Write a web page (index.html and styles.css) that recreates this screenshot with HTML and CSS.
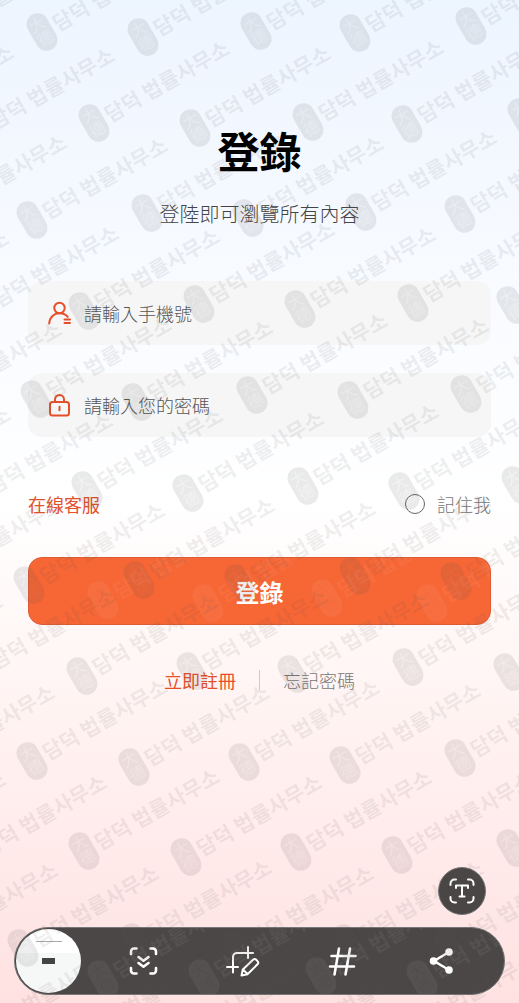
FILE: index.html
```html
<!DOCTYPE html>
<html lang="zh-Hant">
<head>
<meta charset="utf-8">
<meta name="viewport" content="width=device-width, initial-scale=1">
<title>登錄</title>
<link rel="stylesheet" href="styles.css">
</head>
<body>
<main class="login">
  <h1 class="title">登錄</h1>
  <p class="subtitle">登陸即可瀏覽所有內容</p>
  <form class="form">
    <div class="field">
      <label for="phone" aria-label="請輸入手機號">
        <svg class="field-icon" viewBox="0 0 24 24"><circle cx="11.500" cy="7" r="5.200"/><path d="M1.200 22.500C1.700 16 6 12.300 11.500 12.300c3.500 0 6.300 1.200 8.200 3.500M16.500 18.500h5.500M16.500 22h5.500"/></svg>
      </label>
      <input type="tel" id="phone" name="phone" placeholder="請輸入手機號">
    </div>
    <div class="field">
      <label for="password" aria-label="請輸入您的密碼">
        <svg class="field-icon" viewBox="0 0 24 24"><rect x="2" y="9" width="19" height="13.500" rx="2.500"/><path d="M7 9V6.500a4.500 4.500 0 0 1 9 0V9M11.500 13.700v3.600"/></svg>
      </label>
      <input type="password" id="password" name="password" placeholder="請輸入您的密碼">
    </div>
    <div class="options">
      <a class="accent" href="#service">在線客服</a>
      <label class="remember"><input type="checkbox" name="remember">記住我</label>
    </div>
    <button class="submit" type="submit">
      <svg class="glow" aria-hidden="true"><use href="#mark" x="74" y="42"/><use href="#mark" x="179" y="45"/><use href="#mark" x="298" y="40"/><use href="#mark" x="403" y="45"/></svg>
      登錄
    </button>
  </form>
  <nav class="links">
    <a class="accent" href="#register">立即註冊</a>
    <span class="divider"></span>
    <a class="muted" href="#forgot">忘記密碼</a>
  </nav>
</main>

<footer class="tools">
  <button class="text-tool" type="button" aria-label="T">
    <svg viewBox="0 0 28 28"><path d="M2.500 8V6.500a4 4 0 0 1 4-4H8M20 2.500h1.500a4 4 0 0 1 4 4V8M25.500 20v1.500a4 4 0 0 1-4 4H20M8 25.500H6.500a4 4 0 0 1-4-4V20M8 11V8.500h12V11M14 8.500v11M11.500 19.500h5"/></svg>
  </button>
  <div class="toolbar">
    <svg class="glow" aria-hidden="true"><use href="#mark" x="88" y="51"/><use href="#mark" x="189" y="50"/><use href="#mark" x="306" y="48"/><use href="#mark" x="407" y="51"/></svg>
    <button class="thumb" type="button" aria-label="preview"><span class="thumb-line"></span><span class="thumb-box"></span></button>
    <div class="actions">
      <button type="button" aria-label="scroll capture">
        <svg viewBox="0 0 34 34"><path d="M4 10V7.500a3 3 0 0 1 3-3H9.500M23.500 4.500H26a3 3 0 0 1 3 3V10M29 24v2.500a3 3 0 0 1-3 3H23.500M9.500 29.500H7a3 3 0 0 1-3-3V24M11.500 13l5 3.700 5-3.700M11.500 19l5 3.700 5-3.700"/></svg>
      </button>
      <button type="button" aria-label="crop and edit">
        <svg class="thin" viewBox="0 0 34 34"><path d="M1 23h11M7 28.500V13a4 4 0 0 1 4-4h16M22 3v11M15.500 31.500l1.300-6L27 15.800a2.300 2.300 0 0 1 3.200 0l1.300 1.300a2.300 2.300 0 0 1 0 3.200L21.500 30.200zM17 25.500l4.500 4.500"/></svg>
      </button>
      <button type="button" aria-label="hashtag">
        <svg viewBox="0 0 34 34"><path d="M14 4.500l-4.500 26M25 4.500l-4.500 26M6.500 12H30.500M5 22.500H29"/></svg>
      </button>
      <button type="button" aria-label="share">
        <svg viewBox="0 0 34 34"><path d="M25 8L10 17l15 9"/><g class="dots"><circle cx="25" cy="8" r="3.800"/><circle cx="9.500" cy="17" r="3.800"/><circle cx="25" cy="26" r="3.800"/></g></svg>
      </button>
    </div>
  </div>
</footer>

<svg class="watermark" aria-hidden="true">
  <defs>
    <mask id="carved" maskUnits="userSpaceOnUse" x="-12" y="-21" width="24" height="42">
      <rect x="-12" y="-21" width="24" height="42" fill="#fff"/>
      <text class="seal" x="0" y="-3">大</text>
      <text class="seal" x="0" y="13">德</text>
    </mask>
    <g id="mark">
      <g transform="rotate(-30)">
        <rect class="stamp" x="-11" y="-20" width="22" height="40" rx="11" mask="url(#carved)"/>
        <text class="firm" x="14" y="8">담덕 법률사무소</text>
      </g>
    </g>
    <g id="chain">
      <use href="#mark"/>
      <use href="#mark" x="52" y="91"/>
      <use href="#mark" x="105" y="181"/>
      <use href="#mark" x="157" y="272"/>
      <use href="#mark" x="210" y="363"/>
      <use href="#mark" x="261" y="454"/>
      <use href="#mark" x="313" y="544"/>
      <use href="#mark" x="366" y="635"/>
      <use href="#mark" x="418" y="726"/>
      <use href="#mark" x="470" y="816"/>
      <use href="#mark" x="522" y="907"/>
      <use href="#mark" x="574" y="998"/>
    </g>
  </defs>
  <use href="#chain" x="471" y="26"/>
  <use href="#chain" x="355" y="33"/>
  <use href="#chain" x="256" y="31"/>
  <use href="#chain" x="143" y="37"/>
  <use href="#chain" x="42" y="32"/>
  <use href="#chain" x="-73" y="39"/>
  <use href="#chain" x="-174" y="36"/>
  <use href="#chain" x="-284" y="41"/>
  <use href="#chain" x="-386" y="35"/>
  <use href="#chain" x="-499" y="41"/>
  <use href="#chain" x="-600" y="38"/>
</svg>
</body>
</html>
```
FILE: styles.css
```css
* {box-sizing:border-box;}

body {
  margin:0;
  min-height:100vh;
  position:relative;
  display:flex;
  flex-direction:column;
  justify-content:space-between;
  overflow-x:hidden;
  font-family:"Noto Sans CJK TC","Noto Sans CJK KR",sans-serif;
  font-size:18px;
  line-height:28px;
  color:#444;
  background:linear-gradient(#edf5ff 0%,#f7faff 25%,#fff 50%,#fff5f4 68%,#ffe1e1 100%);
}

a {text-decoration:none;}
button {border:0;padding:0;font-family:inherit;cursor:pointer;}

.login {padding:120px 28px 0;text-align:center;}
.title {margin:0;font-size:42px;line-height:60px;font-weight:700;color:#000;}
.subtitle {margin:20px 0 0;font-size:20px;font-weight:300;}

.form {margin-top:53px;display:flex;flex-direction:column;gap:28px;}
.field {
  display:flex;
  align-items:center;
  gap:12px;
  height:64px;
  padding:0 20px;
  border-radius:14px;
  background:#f6f6f6;
}
.field label {display:flex;}
.field input {
  flex:1;
  min-width:0;
  border:0;
  padding:0;
  background:none;
  font:inherit;
  font-weight:300;
  outline:none;
}
.field input::placeholder {color:#555;opacity:1;}
.field-icon {width:24px;height:24px;fill:none;stroke:#e5502a;stroke-width:2;stroke-linecap:round;}

.accent {color:#e5502a;}
.muted {color:#777;}

.options {display:flex;justify-content:space-between;align-items:center;margin:25px 0 11px;}
.remember {display:flex;align-items:center;gap:12px;color:#777;font-weight:300;}
.remember input {
  appearance:none;
  width:20px;
  height:20px;
  margin:0;
  border:1px solid #666;
  border-radius:50%;
}
.remember input:checked {background:#f76635;}

.submit {
  position:relative;
  overflow:hidden;
  height:68px;
  border:1px solid #dd5c35;
  border-radius:14px;
  background:#f76635;
  color:#fff;
  font-size:24px;
  font-weight:700;
}
.glow {--mark:#fff;position:absolute;inset:0;width:100%;height:100%;opacity:.5;}

.links {display:flex;justify-content:center;align-items:center;gap:23px;margin-top:41px;}
.links .muted {font-weight:300;}
.divider {width:1px;height:20px;background:#ccc;}

.tools {display:flex;flex-direction:column;gap:12px;padding:40px 14px 8px;}
.text-tool {
  align-self:flex-end;
  display:flex;
  align-items:center;
  justify-content:center;
  width:48px;
  height:48px;
  margin-right:19px;
  border:1px solid #777;
  border-radius:50%;
  background:#4a4646;
}
.text-tool svg {width:28px;height:28px;}
.tools svg {stroke-width:2;stroke-linecap:round;stroke-linejoin:round;}
.tools button svg {fill:none;stroke:#fff;}
.toolbar {
  position:relative;
  overflow:hidden;
  display:flex;
  align-items:center;
  height:68px;
  padding-left:1px;
  border:1px solid #777;
  border-radius:34px;
  background:#4c4747;
}
.thumb {
  position:relative;
  display:flex;
  flex-direction:column;
  align-items:center;
  gap:16px;
  width:65px;
  height:64px;
  padding-top:12px;
  border-radius:50%;
  background:linear-gradient(#fff 37%,#f6f7f7 37%);
}
.thumb-line {width:26px;height:1px;background:#aaa;}
.thumb-box {width:13px;height:6px;background:#444;}
.actions {position:relative;flex:1;display:flex;justify-content:space-between;padding:0 46px;}
.actions button {display:flex;background:none;}
.actions svg {width:34px;height:34px;stroke-width:2.6;}
.actions .thin {stroke-width:2;}
.tools .dots {fill:#fff;stroke:none;}

/* diagonal watermark over the whole page */
.watermark {
  position:absolute;
  inset:0;
  width:100%;
  height:100%;
  pointer-events:none;
}
.stamp {fill:var(--mark,#555);fill-opacity:.12;stroke:none;}
.seal {fill:#999;font-size:16px;text-anchor:middle;}
.firm {
  fill:var(--mark,#555);
  fill-opacity:.11;
  stroke:none;
  font-family:"Noto Sans CJK KR",sans-serif;
  font-size:21px;
  font-weight:700;
}
```
